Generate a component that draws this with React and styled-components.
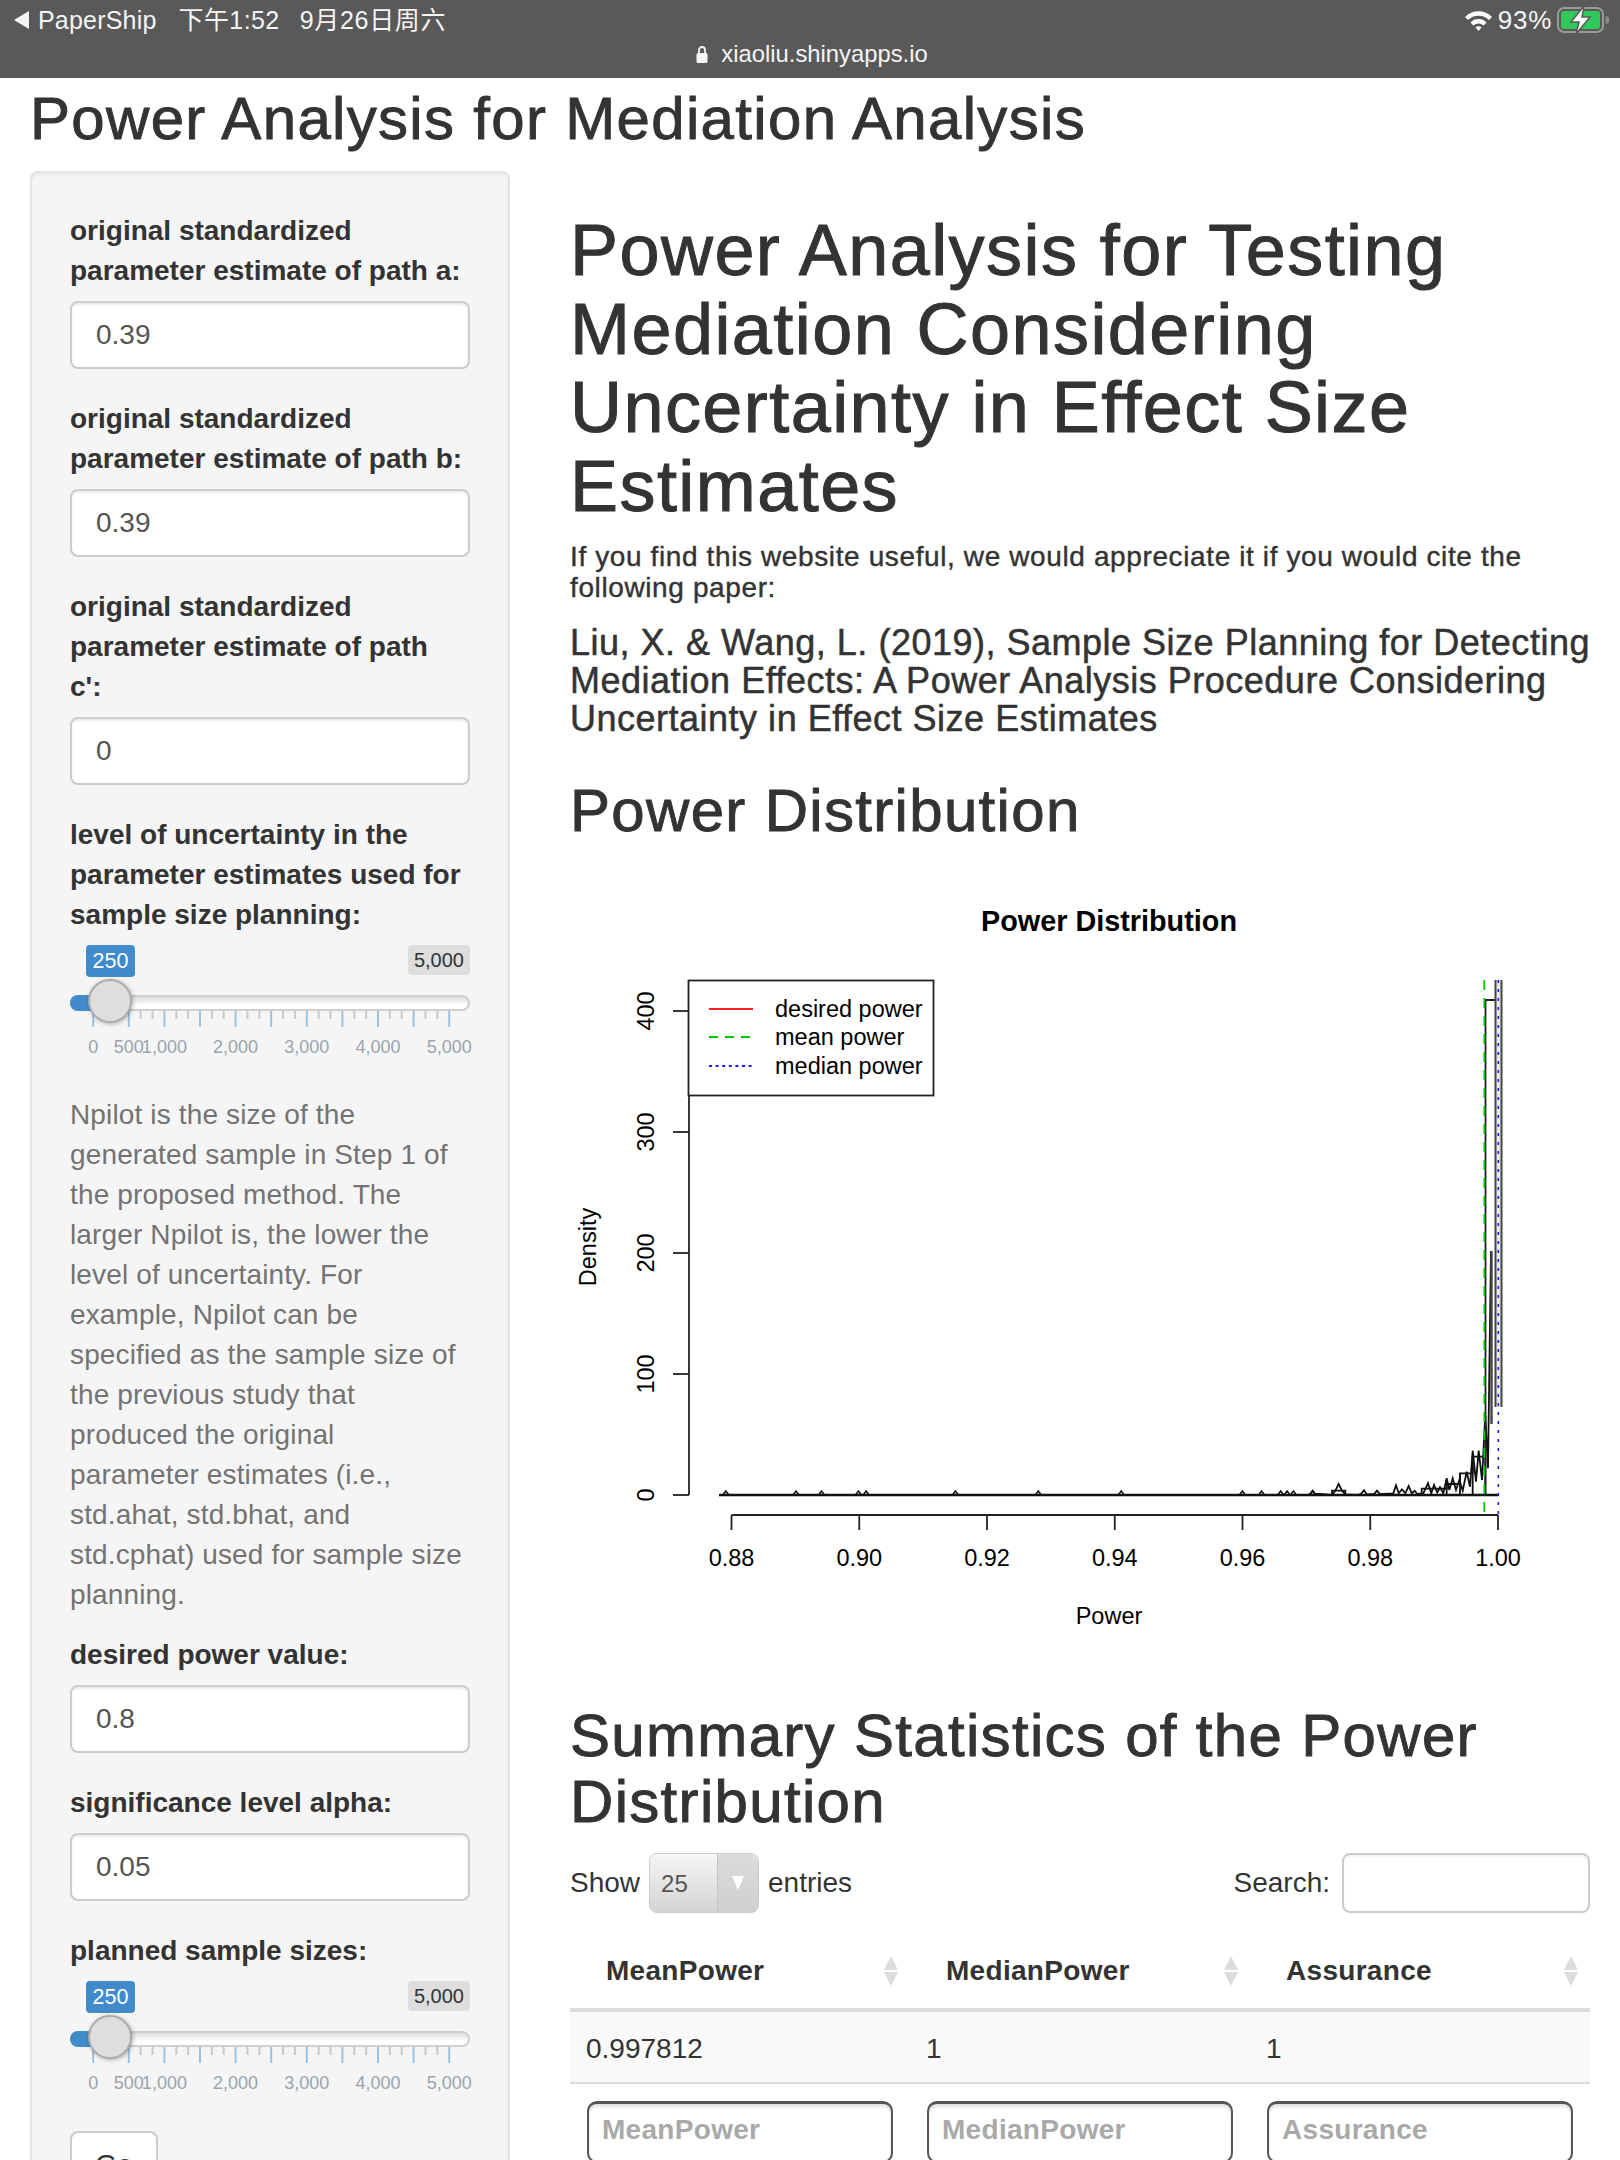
import React from "react";
import styled, { createGlobalStyle } from "styled-components";

const Global = createGlobalStyle`
  html, body { margin: 0; padding: 0; background: #fff; }
  body { width: 1620px; height: 2160px; overflow: hidden; font-family: "Liberation Sans", Arial, sans-serif; font-size: 28px; line-height: 40px; color: #333; }
  * { box-sizing: border-box; }
`;

const StatusBar = styled.header`
  height: 78px; background: #595959; color: #f4f4f4; position: relative;
  font-size: 24px; line-height: 28px;
`;
const StatusTop = styled.div`
  display: flex; align-items: center; height: 40px; padding: 0 14px;
`;
const BackArrow = styled.svg`width: 15px; height: 18px; margin-right: 9px; flex: none;`;
const StatusText = styled.span`
  margin-right: ${p => p.$gap || 0}px; white-space: nowrap; letter-spacing: ${p => p.$track || 0.2}px;
  font-family: "Liberation Sans", "Noto Sans CJK SC", sans-serif; font-size: ${p => p.$size || 25}px;
`;
const StatusRight = styled.div`margin-left: auto; display: flex; align-items: center; gap: 5px; margin-right: -3px;`;
const UrlRow = styled.div`
  display: flex; justify-content: center; align-items: center; gap: 13px; height: 28px; padding-left: 4px;
  font-family: "Liberation Sans", sans-serif; font-size: 23.8px;
`;

const Page = styled.div`padding: 0 30px;`;
const AppTitle = styled.h2`
  font-size: 60px; font-weight: 500; line-height: 66px; margin: 8px 0 19px; color: #333; white-space: nowrap;
  letter-spacing: 0.022em; -webkit-text-stroke: 0.9px #333;
`;
const Columns = styled.div`display: flex; gap: 60px; align-items: flex-start;`;
const Panel = styled.aside`
  width: 480px; flex: none; background: #f5f5f5; border: 2px solid #e3e3e3; border-radius: 8px;
  padding: 38px; box-shadow: inset 0 2px 2px rgba(0,0,0,.05);
`;
const FormGroup = styled.div`margin-bottom: 30px;`;
const Label = styled.label`display: block; font-weight: 700; margin-bottom: 10px;`;
const Field = styled.div`
  height: 68px; background: #fff; border: 2px solid #ccc; border-radius: 8px; padding: 0 24px;
  display: flex; align-items: center; color: #555; box-shadow: inset 0 2px 2px rgba(0,0,0,.075);
`;
const Help = styled.p`margin: 0 0 20px; color: #737373; letter-spacing: 0.14px;`;
const GoButton = styled.button`
  display: block; width: 88px; height: 68px; background: #fff; border: 2px solid #ccc; border-radius: 8px;
  font: inherit; color: #333; padding: 0;
`;

const SliderBox = styled.div`position: relative; height: 120px; margin-bottom: 30px;`;
const TagRow = styled.div`display: flex; justify-content: space-between; align-items: flex-start; padding-left: 16px; height: 32px;`;
const FromTag = styled.span`
  background: #428bca; color: #fff; font-size: 21.5px; line-height: 32px; height: 32px; padding: 0 6.5px; border-radius: 4px;
`;
const MaxTag = styled.span`
  background: #dedede; color: #333; font-size: 20px; line-height: 30px; height: 30px; padding: 0 6px; border-radius: 4px;
`;
const Track = styled.div`
  position: relative; height: 16px; margin-top: 18px; border: 2px solid #cfcfcf; border-radius: 8px;
  background: linear-gradient(#dedede, #fff 70%);
`;
const Fill = styled.div`
  position: absolute; left: -2px; top: -2px; width: 42px; height: 16px; background: #428bca; border-radius: 8px 0 0 8px;
`;
const Handle = styled.div`
  position: absolute; left: 16px; top: -18px; width: 44px; height: 44px; border-radius: 50%;
  background: #dedede; border: 2px solid #ababab; box-shadow: 1px 1px 4px rgba(0,0,0,.3);
`;
const Ticks = styled.svg`display: block; width: 400px; height: 16px;`;
const TickLabels = styled.div`position: relative; height: 24px; margin-top: 8px;`;
const TickLabel = styled.span`
  position: absolute; top: 0; transform: translateX(-50%); color: #99a4ad; font-size: 18px; line-height: 24px; white-space: nowrap;
`;

const Main = styled.main`width: 1020px; flex: none;`;
const H1 = styled.h1`
  font-size: 72px; font-weight: 500; line-height: 78.5px; margin: 0 0 17px; padding-top: 40px; color: #333;
  letter-spacing: 0.02em; -webkit-text-stroke: 1px #333;
`;
const H5 = styled.h5`
  font-size: 28px; font-weight: 500; line-height: 30.8px; margin: 0 0 20px; color: #333;
  letter-spacing: 0.022em; -webkit-text-stroke: 0.4px #333;
`;
const H4 = styled.h4`
  font-size: 36px; font-weight: 500; line-height: 38px; margin: 0 0 40px; color: #333;
  letter-spacing: 0.014em; -webkit-text-stroke: 0.5px #333;
`;
const H2 = styled.h2`
  font-size: 60px; font-weight: 500; line-height: 66px; margin: 0 0 20px; color: #333;
  letter-spacing: 0.022em; -webkit-text-stroke: 0.9px #333;
`;
const Plot = styled.svg`display: block; width: 1020px; height: 800px; margin: 2px 0 39px;`;

const Controls = styled.div`display: flex; justify-content: space-between; align-items: center; height: 60px; margin-top: -2px;`;
const ControlGroup = styled.div`display: flex; align-items: center; gap: ${p => p.$gap}px;`;
const FakeSelect = styled.div`
  position: relative; width: 110px; height: 60px; border-radius: 8px; border: 1px solid #ccc;
  background: linear-gradient(#f6f6f6, #d4d4d4); color: #555; font-size: 24px; line-height: 60px; padding-left: 11px;
`;
const SelectCap = styled.div`
  position: absolute; right: 0; top: 0; bottom: 0; width: 41px; border-left: 1px solid #c4c4c4; border-radius: 0 8px 8px 0;
  display: flex; align-items: center; justify-content: center; background: linear-gradient(#dcdcdc, #cfcfcf);
`;
const SearchBox = styled.div`
  width: 248px; height: 60px; background: #fff; border: 2px solid #ccc; border-radius: 8px;
  box-shadow: inset 0 2px 2px rgba(0,0,0,.05);
`;
const Table = styled.table`
  width: 1020px; table-layout: fixed; border-collapse: collapse; margin-top: 18px;
`;
const Th = styled.th`
  height: 79px; padding: 3px 9px 0 36px; text-align: left; font-weight: 700; border-bottom: 4px solid #ddd; vertical-align: middle;
  letter-spacing: 0.3px;
`;
const ThInner = styled.div`display: flex; justify-content: space-between; align-items: center;`;
const Sort = styled.svg`width: 16px; height: 32px; flex: none; margin-right: 2px;`;
const Td = styled.td`
  height: 73px; padding: 4px 16px 0; background: #f9f9f9; border-bottom: 2px solid #ddd;
`;
const FilterCell = styled.td`padding: 17px 17px 0;`;
const FilterBox = styled.div`
  height: 62px; border: 2px solid #555; border-top-width: 3px; border-radius: 10px; padding: 0 13px; background: #fff;
  color: #a9a9a9; font-weight: 700; line-height: 52px; letter-spacing: 0.3px; box-shadow: inset 0 3px 3px rgba(0,0,0,.12);
`;

function Slider() {
  const left = v => 23.2 + (v / 5000) * 356;
  const steps = Array.from({ length: 31 }, (_, i) => i);
  const labels = [0, 500, 1000, 2000, 3000, 4000, 5000];
  return (
    <SliderBox>
      <TagRow><FromTag>250</FromTag><MaxTag>5,000</MaxTag></TagRow>
      <Track><Fill /><Handle /></Track>
      <Ticks viewBox="0 0 400 16">
        {steps.map(i => {
          const major = i % 3 === 0;
          const x = left((i / 30) * 5000);
          return <line key={i} x1={x} x2={x} y1="0" y2={major ? 16 : 8} stroke={major ? "#9cc2e2" : "#c9c9c9"} strokeWidth="2" />;
        })}
      </Ticks>
      <TickLabels>
        {labels.map(v => (
          <TickLabel key={v} style={{ left: left(v) }}>{v.toLocaleString("en-US")}</TickLabel>
        ))}
      </TickLabels>
    </SliderBox>
  );
}

const X0 = 570, Y0 = 864;
const zx = p => 1300 + p / 3 - X0;
const zy = p => 1260 + p / 3 - Y0;
const curvePts = [[0,705],[20,705],[30,702],[38,692],[46,702],[60,702],[96,705],[106,692],[116,672],[126,692],[136,703],[170,705],[182,702],[192,691],[200,703],[222,702],[231,692],[240,702],[250,702],[280,700],[288,676],[296,700],[306,688],[316,700],[326,678],[335,700],[344,692],[352,702],[370,700],[384,670],[394,700],[402,675],[412,698],[420,682],[430,700],[440,655],[448,690],[458,655],[468,690],[478,660],[488,692],[500,635],[510,680],[518,572],[528,665],[536,572],[546,660],[556,465],[564,625],[573,-27]];
const curve = curvePts.map(([a, b]) => `${zx(a).toFixed(1)},${zy(b).toFixed(1)}`).join(" ");
const bumps = [260,370,410,468,480,620,750,880,1070,1100,1130,1140,1150,1180].map(p => 560 + p / 1.568 - X0);
const hist = [[96,705],[96,692],[136,692],[136,705]];
const histB = [[365,705],[365,686],[440,686],[440,672],[480,672],[480,640],[518,640],[518,590],[556,590],[556,705]];
const toPts = list => list.map(([a, b]) => `${zx(a).toFixed(1)},${zy(b).toFixed(1)}`).join(" ");

function PowerPlot() {
  const xTicks = ["0.88", "0.90", "0.92", "0.94", "0.96", "0.98", "1.00"];
  const xs = i => 161.5 + i * 127.75;
  const yv = [0, 100, 200, 300, 400];
  const ys = v => 631 - v * 1.21;
  return (
    <Plot viewBox="0 0 1020 800" fontFamily="'Liberation Sans', Arial, sans-serif" fontSize="23.5" fill="#000">
      <text x="539" y="67" textAnchor="middle" fontWeight="700" fontSize="28.8">Power Distribution</text>
      <line x1="119" x2="119" y1={ys(400)} y2={ys(0)} stroke="#222" strokeWidth="1.8" />
      {yv.map(v => (
        <g key={v}>
          <line x1="103" x2="119" y1={ys(v)} y2={ys(v)} stroke="#222" strokeWidth="1.8" />
          <text transform={`translate(84 ${ys(v)}) rotate(-90)`} textAnchor="middle">{v}</text>
        </g>
      ))}
      <text transform="translate(26 383) rotate(-90)" textAnchor="middle">Density</text>
      <line x1={xs(0)} x2={xs(6)} y1="651" y2="651" stroke="#222" strokeWidth="1.8" />
      {xTicks.map((t, i) => (
        <g key={t}>
          <line x1={xs(i)} x2={xs(i)} y1="651" y2="666" stroke="#222" strokeWidth="1.8" />
          <text x={xs(i)} y="702" textAnchor="middle">{t}</text>
        </g>
      ))}
      <text x="539" y="760" textAnchor="middle">Power</text>

      <line x1="149" x2="928" y1="631" y2="631" stroke="#111" strokeWidth="2.4" />
      {bumps.map(x => <path key={x} d={`M${x - 3} 631 L${x} 627 L${x + 3} 631`} fill="none" stroke="#111" strokeWidth="1.6" />)}
      <polyline points={curve} fill="none" stroke="#111" strokeWidth="1.8" />
      <polyline points={toPts(hist)} fill="none" stroke="#111" strokeWidth="1.8" />
      <polyline points={toPts(histB)} fill="none" stroke="#111" strokeWidth="1.8" />
      <line x1={zx(480)} x2={zx(480)} y1={zy(640)} y2="631" stroke="#111" strokeWidth="1.8" />
      <line x1={zx(518)} x2={zx(518)} y1={zy(590)} y2="631" stroke="#111" strokeWidth="1.8" />
      <line x1={zx(440)} x2={zx(440)} y1={zy(672)} y2="631" stroke="#111" strokeWidth="1.8" />
      <path d="M915.5 631 V136 H928.5" fill="none" stroke="#222" strokeWidth="1.8" />
      <rect x="926" y="116" width="5" height="427" fill="#e8e8e8" />
      <line x1="925.5" x2="925.5" y1="116" y2="543" stroke="#444" strokeWidth="2" />
      <line x1="931.5" x2="931.5" y1="116" y2="543" stroke="#444" strokeWidth="2" />
      <line x1="921.5" x2="921.5" y1="387" y2="560" stroke="#444" strokeWidth="2.4" />
      <line x1="914.3" x2="914.3" y1="116" y2="651" stroke="#00cd00" strokeWidth="1.8" strokeDasharray="10 8" />
      <line x1="928.3" x2="928.3" y1="116" y2="651" stroke="#1a1aff" strokeWidth="1.6" strokeDasharray="3 6" />

      <rect x="118.5" y="116.5" width="245" height="115" fill="#fff" stroke="#222" strokeWidth="1.8" />
      <line x1="139" x2="183" y1="145" y2="145" stroke="#ff2020" strokeWidth="1.8" />
      <line x1="139" x2="183" y1="173" y2="173" stroke="#00cd00" strokeWidth="1.8" strokeDasharray="9 7" />
      <line x1="139" x2="183" y1="202" y2="202" stroke="#1a1aff" strokeWidth="1.8" strokeDasharray="3 3.6" />
      <text x="205" y="153">desired power</text>
      <text x="205" y="181">mean power</text>
      <text x="205" y="210">median power</text>
    </Plot>
  );
}

function SortIcon() {
  return (
    <Sort viewBox="0 0 16 32">
      <path d="M8 1 L15 15 H1 Z" fill="#dcdcdc" />
      <path d="M8 31 L15 17 H1 Z" fill="#dcdcdc" />
    </Sort>
  );
}

export default function App() {
  const cols = ["MeanPower", "MedianPower", "Assurance"];
  return (
    <>
      <Global />
      <StatusBar>
        <StatusTop>
          <BackArrow viewBox="0 0 15 18"><path d="M15 0 V18 L0 9 Z" fill="#f4f4f4" /></BackArrow>
          <StatusText $gap={22}>PaperShip</StatusText>
          <StatusText $gap={20} $track={0.4}>下午1:52</StatusText>
          <StatusText $track={0.7}>9月26日周六</StatusText>
          <StatusRight>
            <svg width="29" height="22" viewBox="0 0 29 22">
              <path d="M1 8 A19 19 0 0 1 28 8 L25 11 A15 15 0 0 0 4 11 Z" fill="#fff" />
              <path d="M6.5 13.5 A11 11 0 0 1 22.5 13.5 L19.5 16.5 A7 7 0 0 0 9.5 16.5 Z" fill="#fff" />
              <path d="M11.5 18.5 A4 4 0 0 1 17.5 18.5 L14.5 22 Z" fill="#fff" />
            </svg>
            <StatusText $size={26} $track={0.7}>93%</StatusText>
            <svg width="52" height="28" viewBox="0 0 52 28">
              <rect x="1" y="2" width="45" height="24" rx="6" fill="none" stroke="#9a9a9a" strokeWidth="2" />
              <rect x="4" y="5" width="39" height="18" rx="3" fill="#30c85a" />
              <path d="M48.5 10 a4 4 0 0 1 0 8 Z" fill="#8a8a8a" />
              <path d="M27 0 L14 16 H22 L19 28 L33 11 H25 Z" fill="#fff" stroke="#595959" strokeWidth="1.5" />
            </svg>
          </StatusRight>
        </StatusTop>
        <UrlRow>
          <svg width="12" height="18" viewBox="0 0 12 18">
            <path d="M3 8 V5 a3 3 0 0 1 6 0 V8" fill="none" stroke="#f4f4f4" strokeWidth="1.8" />
            <rect x="0.5" y="8" width="11" height="10" rx="1.5" fill="#f4f4f4" />
          </svg>
          <span>xiaoliu.shinyapps.io</span>
        </UrlRow>
      </StatusBar>
      <Page>
        <AppTitle>Power Analysis for Mediation Analysis</AppTitle>
        <Columns>
          <Panel>
            <FormGroup><Label>original standardized parameter estimate of path a:</Label><Field>0.39</Field></FormGroup>
            <FormGroup><Label>original standardized parameter estimate of path b:</Label><Field>0.39</Field></FormGroup>
            <FormGroup><Label>original standardized parameter estimate of path<br />c':</Label><Field>0</Field></FormGroup>
            <Label>level of uncertainty in the parameter estimates used for sample size planning:</Label>
            <Slider />
            <Help>Npilot is the size of the generated sample in Step 1 of the proposed method. The larger Npilot is, the lower the level of uncertainty. For example, Npilot can be specified as the sample size of the previous study that produced the original parameter estimates (i.e., std.ahat, std.bhat, and std.cphat) used for sample size planning.</Help>
            <FormGroup><Label>desired power value:</Label><Field>0.8</Field></FormGroup>
            <FormGroup><Label>significance level alpha:</Label><Field>0.05</Field></FormGroup>
            <Label>planned sample sizes:</Label>
            <Slider />
            <GoButton>Go</GoButton>
          </Panel>
          <Main>
            <H1>Power Analysis for Testing Mediation Considering Uncertainty in Effect Size Estimates</H1>
            <H5>If you find this website useful, we would appreciate it if you would cite the following paper:</H5>
            <H4>Liu, X. &amp; Wang, L. (2019), Sample Size Planning for Detecting Mediation Effects: A Power Analysis Procedure Considering Uncertainty in Effect Size Estimates</H4>
            <H2>Power Distribution</H2>
            <PowerPlot />
            <H2>Summary Statistics of the Power Distribution</H2>
            <Controls>
              <ControlGroup $gap={9}>
                <span>Show</span>
                <FakeSelect>25<SelectCap>
                  <svg width="14" height="16" viewBox="0 0 14 16"><path d="M1 1 H13 L7 15 Z" fill="#fff" /></svg>
                </SelectCap></FakeSelect>
                <span>entries</span>
              </ControlGroup>
              <ControlGroup $gap={12}>
                <span>Search:</span>
                <SearchBox />
              </ControlGroup>
            </Controls>
            <Table>
              <thead>
                <tr>{cols.map(c => <Th key={c}><ThInner>{c}<SortIcon /></ThInner></Th>)}</tr>
              </thead>
              <tbody>
                <tr><Td>0.997812</Td><Td>1</Td><Td>1</Td></tr>
                <tr>{cols.map(c => <FilterCell key={c}><FilterBox>{c}</FilterBox></FilterCell>)}</tr>
              </tbody>
            </Table>
          </Main>
        </Columns>
      </Page>
    </>
  );
}
